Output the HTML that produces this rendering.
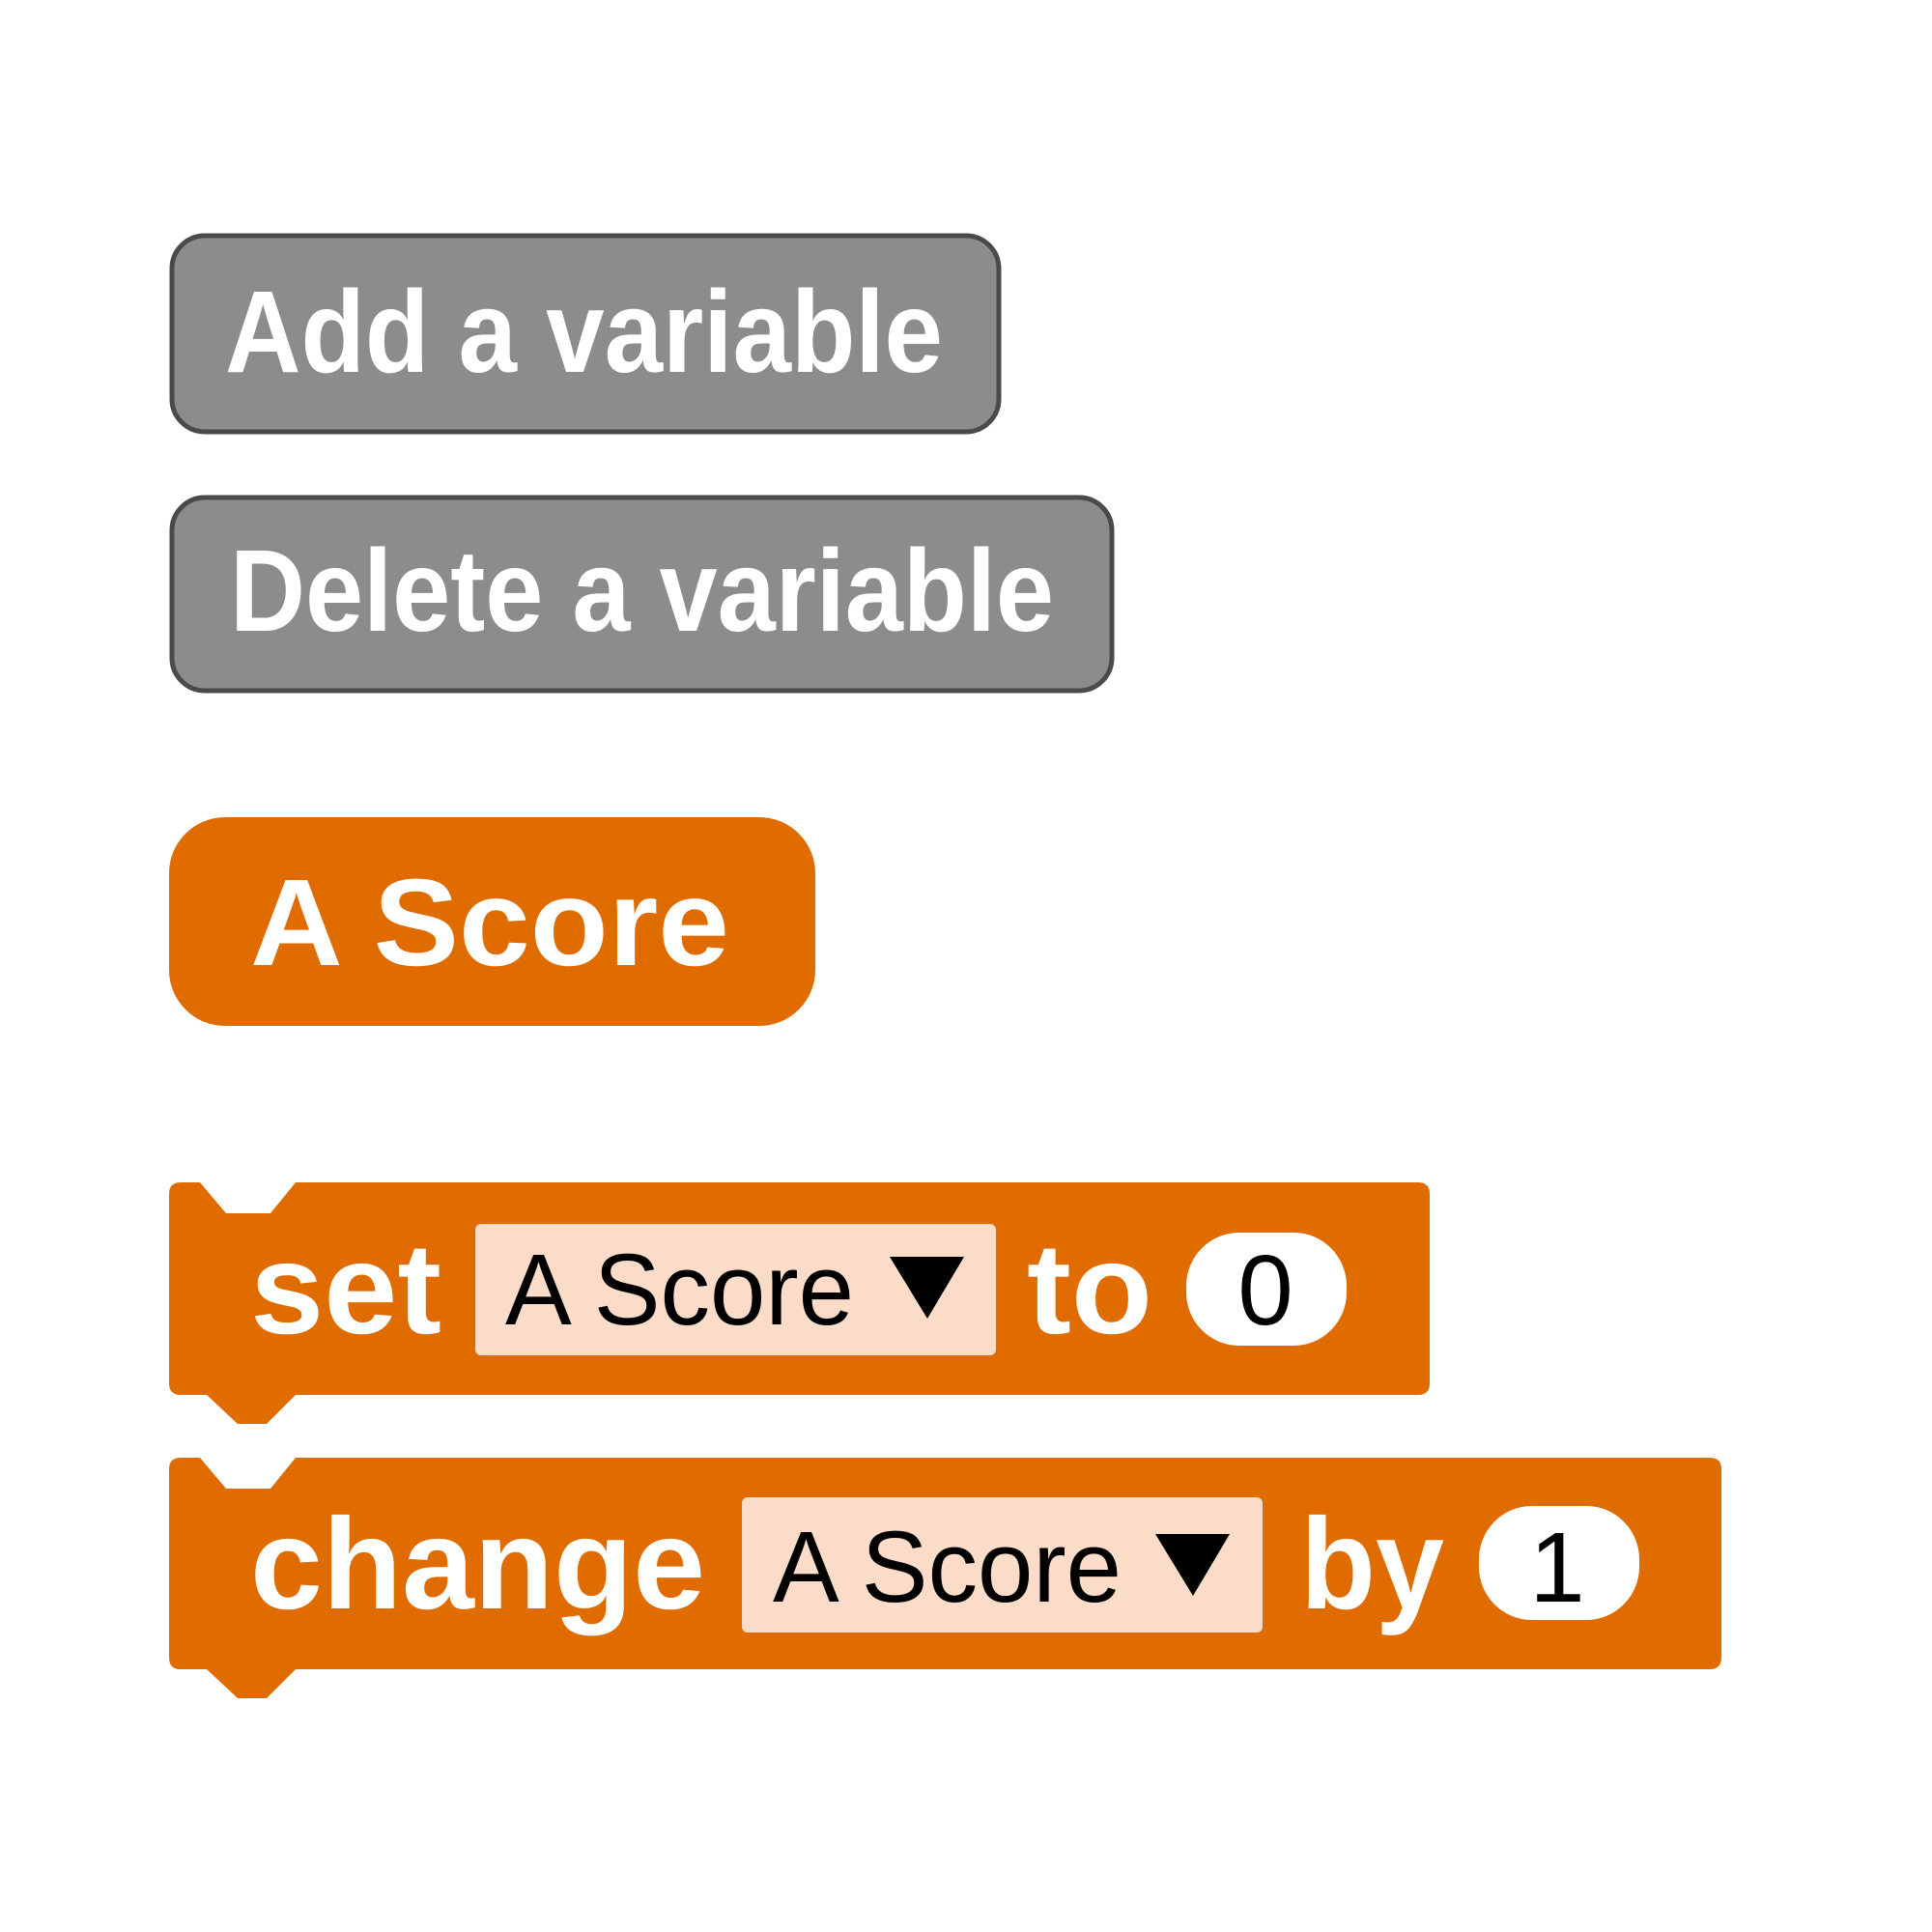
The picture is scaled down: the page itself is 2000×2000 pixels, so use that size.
<!DOCTYPE html>
<html><head><meta charset="utf-8"><style>
html,body{margin:0;padding:0;background:#fff;width:2000px;height:2000px;overflow:hidden}
svg{display:block}
</style></head><body>
<svg width="2000" height="2000" viewBox="0 0 2000 2000" xmlns="http://www.w3.org/2000/svg" font-family="'Liberation Sans', Arial, sans-serif">
<rect x="0" y="0" width="2000" height="2000" fill="#fff"/>
<!-- Add a variable -->
<rect x="178" y="244" width="856" height="203" rx="34" fill="#8c8c8c" stroke="#4a4a4a" stroke-width="5"/>
<text x="233" y="385" font-size="121" font-weight="bold" fill="#fff" textLength="743" lengthAdjust="spacingAndGlyphs">Add a variable</text>
<!-- Delete a variable -->
<rect x="178" y="515" width="973" height="200" rx="34" fill="#8c8c8c" stroke="#4a4a4a" stroke-width="5"/>
<text x="238" y="653" font-size="121" font-weight="bold" fill="#fff" textLength="853" lengthAdjust="spacingAndGlyphs">Delete a variable</text>
<!-- A Score reporter -->
<rect x="175" y="846" width="669" height="216" rx="58" fill="#e06c00"/>
<text x="259" y="999" font-size="128" font-weight="bold" fill="#fff" textLength="496" lengthAdjust="spacingAndGlyphs">A Score</text>
<!-- set block -->
<path d="M175 1236 Q175 1224 187 1224 L207 1224 L234 1256 L280 1256 L306 1224 L1468 1224 Q1480 1224 1480 1236 L1480 1432 Q1480 1444 1468 1444 L306 1444 L276 1474 L246 1474 L214 1444 L187 1444 Q175 1444 175 1432 Z" fill="#e06c00"/>
<text x="259" y="1380" font-size="134" font-weight="bold" fill="#fff" textLength="198" lengthAdjust="spacingAndGlyphs">set</text>
<rect x="492" y="1267" width="539" height="136" rx="6" fill="#fadcc8"/>
<text x="523" y="1371" font-size="105" fill="#000" textLength="361" lengthAdjust="spacingAndGlyphs">A Score</text>
<path d="M921 1301 L998 1301 L960 1365 Z" fill="#000"/>
<text x="1063" y="1380" font-size="134" font-weight="bold" fill="#fff" textLength="130" lengthAdjust="spacingAndGlyphs">to</text>
<rect x="1228" y="1276" width="166" height="117" rx="55" fill="#fff"/>
<text x="1310" y="1371" font-size="103" fill="#000" text-anchor="middle">0</text>
<!-- change block -->
<path d="M175 1521 Q175 1509 187 1509 L207 1509 L234 1541 L280 1541 L306 1509 L1770 1509 Q1782 1509 1782 1521 L1782 1716 Q1782 1728 1770 1728 L306 1728 L276 1758 L246 1758 L214 1728 L187 1728 Q175 1728 175 1716 Z" fill="#e06c00"/>
<text x="259" y="1665" font-size="134" font-weight="bold" fill="#fff" textLength="471" lengthAdjust="spacingAndGlyphs">change</text>
<rect x="768" y="1550" width="539" height="140" rx="6" fill="#fadcc8"/>
<text x="800" y="1658" font-size="105" fill="#000" textLength="361" lengthAdjust="spacingAndGlyphs">A Score</text>
<path d="M1196 1588 L1273 1588 L1235 1652 Z" fill="#000"/>
<text x="1346" y="1665" font-size="134" font-weight="bold" fill="#fff" textLength="149" lengthAdjust="spacingAndGlyphs">by</text>
<rect x="1531" y="1559" width="166" height="118" rx="55" fill="#fff"/>
<text x="1612" y="1658" font-size="103" fill="#000" text-anchor="middle">1</text>
</svg>
</body></html>
